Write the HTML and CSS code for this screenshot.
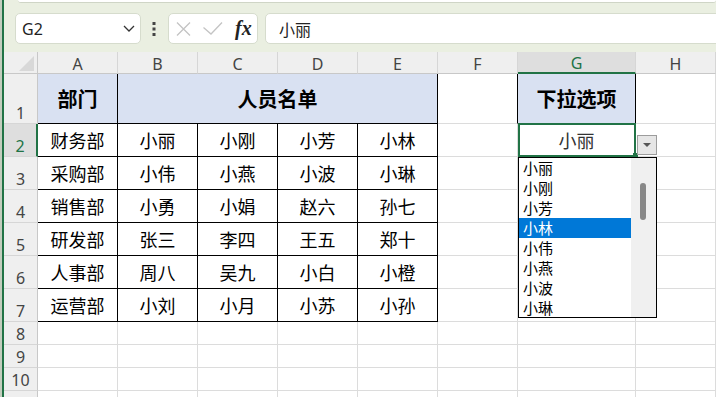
FILE: index.html
```html
<!DOCTYPE html>
<html lang="zh-CN">
<head>
    <meta charset="UTF-8">
    <title>下拉选项</title>
    <link rel="stylesheet" href="styles.css">
</head>
<body>
<div class="app">
    <div class="edge"></div>
    <div class="main">
        <div class="ribbon"></div>

        <!-- formula bar -->
        <div class="fbar">
            <div class="box namebox">
                <span>G2</span>
                <svg width="12" height="7" viewBox="0 0 12 7"><polyline points="1,1 6,6 11,1" fill="none" stroke="#333" stroke-width="1.3"/></svg>
            </div>
            <div class="more">
                <svg width="4" height="14" viewBox="0 0 4 14"><rect x="0.5" y="0" width="3" height="3" fill="#444"/><rect x="0.5" y="5.5" width="3" height="3" fill="#444"/><rect x="0.5" y="11" width="3" height="3" fill="#444"/></svg>
            </div>
            <div class="box fxbox">
                <svg class="ic-x" width="15" height="14" viewBox="0 0 15 14"><path d="M1 0.5 L14 13.5 M14 0.5 L1 13.5" stroke="#c4c4c4" stroke-width="1.3"/></svg>
                <svg class="ic-ok" width="20" height="13" viewBox="0 0 20 13"><polyline points="0.5,5.5 8,12 19,0.5" fill="none" stroke="#c4c4c4" stroke-width="1.3"/></svg>
                <span class="fx">fx</span>
            </div>
            <div class="box formula">小丽</div>
        </div>

        <!-- sheet -->
        <div class="sheet">
            <div class="corner"><svg width="15" height="15" viewBox="0 0 15 15"><polygon points="15,0 15,15 0,15" fill="#d8d8d8"/></svg></div>
            <div class="ch">A</div><div class="ch">B</div><div class="ch">C</div><div class="ch">D</div>
            <div class="ch">E</div><div class="ch">F</div><div class="ch on">G</div><div class="ch">H</div>

            <div class="rh">1</div>
            <div class="c t hd">部门</div>
            <div class="c t hd span4">人员名单</div>
            <div class="c bk"></div>
            <div class="c hd g1">下拉选项</div>
            <div class="c"></div>

            <div class="rh on">2</div>
            <div class="c t">财务部</div><div class="c t">小丽</div><div class="c t">小刚</div><div class="c t">小芳</div><div class="c t">小林</div>
            <div class="c"></div><div class="c val">小丽</div><div class="c"></div>

            <div class="rh">3</div>
            <div class="c t">采购部</div><div class="c t">小伟</div><div class="c t">小燕</div><div class="c t">小波</div><div class="c t">小琳</div>
            <div class="c"></div><div class="c"></div><div class="c"></div>

            <div class="rh">4</div>
            <div class="c t">销售部</div><div class="c t">小勇</div><div class="c t">小娟</div><div class="c t">赵六</div><div class="c t">孙七</div>
            <div class="c"></div><div class="c"></div><div class="c"></div>

            <div class="rh">5</div>
            <div class="c t">研发部</div><div class="c t">张三</div><div class="c t">李四</div><div class="c t">王五</div><div class="c t">郑十</div>
            <div class="c"></div><div class="c"></div><div class="c"></div>

            <div class="rh">6</div>
            <div class="c t">人事部</div><div class="c t">周八</div><div class="c t">吴九</div><div class="c t">小白</div><div class="c t">小橙</div>
            <div class="c"></div><div class="c"></div><div class="c"></div>

            <div class="rh">7</div>
            <div class="c t">运营部</div><div class="c t">小刘</div><div class="c t">小月</div><div class="c t">小苏</div><div class="c t">小孙</div>
            <div class="c"></div><div class="c"></div><div class="c"></div>

            <div class="rh">8</div>
            <div class="c"></div><div class="c"></div><div class="c"></div><div class="c"></div><div class="c"></div><div class="c"></div><div class="c"></div><div class="c"></div>
            <div class="rh">9</div>
            <div class="c"></div><div class="c"></div><div class="c"></div><div class="c"></div><div class="c"></div><div class="c"></div><div class="c"></div><div class="c"></div>
            <div class="rh">10</div>
            <div class="c"></div><div class="c"></div><div class="c"></div><div class="c"></div><div class="c"></div><div class="c"></div><div class="c"></div><div class="c"></div>
            <div class="rh"></div>
            <div class="c"></div><div class="c"></div><div class="c"></div><div class="c"></div><div class="c"></div><div class="c"></div><div class="c"></div><div class="c"></div>

            <!-- selection + validation dropdown, drawn over the grid -->
            <div class="sel"></div>
            <div class="handle"></div>
            <div class="dd-btn"><span class="tri"></span></div>
            <div class="dd-list">
                <ul class="dd-items">
                    <li>小丽</li>
                    <li>小刚</li>
                    <li>小芳</li>
                    <li class="hl">小林</li>
                    <li>小伟</li>
                    <li>小燕</li>
                    <li>小波</li>
                    <li>小琳</li>
                </ul>
                <div class="dd-scroll"><div class="dd-thumb"></div></div>
            </div>
        </div>
    </div>
</div>
</body>
</html>
```

FILE: styles.css
```css
* {
    box-sizing: border-box;
}
body {
    margin: 0;
    width: 716px;
    height: 397px;
    overflow: hidden;
    background: #fff;
    font-family: "Noto Sans", "Noto Sans CJK SC", sans-serif;
}
.app {
    display: flex;
    height: 397px;
}
.edge {
    width: 4px;
    flex: none;
    background: #c3cdbe;
    border-right: 2px solid #217346;
}
.main {
    flex: 1;
    min-width: 0;
    background: #eaefe1;
}
.ribbon {
    height: 3px;
    margin-left: 14px;
    background: #fff;
    border-bottom: 1px solid #cfd5c6;
    border-radius: 0 0 6px 6px;
}

/* formula bar */
.fbar {
    display: flex;
    align-items: center;
    height: 49px;
    padding: 10px 0 8px 11px;
}
.box {
    height: 31px;
    background: #fff;
    border: 1px solid #d6dccd;
    border-radius: 5px;
    display: flex;
    align-items: center;
}
.namebox {
    width: 126px;
    justify-content: space-between;
    padding: 0 5px 0 6px;
    font-size: 16px;
    color: #1f1f1f;
}
.more {
    width: 27px;
    display: flex;
    justify-content: center;
    padding-right: 1px;
}
.fxbox {
    width: 90px;
    padding-left: 7px;
}
.ic-ok {
    margin-left: 12px;
}
.fx {
    margin-left: 12px;
    font-family: "Liberation Serif", serif;
    font-style: italic;
    font-weight: 700;
    font-size: 20px;
    color: #222;
}
.formula {
    flex: 1;
    margin-left: 7px;
    margin-right: -10px;
    padding-left: 13px;
    font-family: "Noto Sans CJK SC", sans-serif;
    font-size: 16px;
    color: #222;
}

/* grid */
.sheet {
    position: relative;
    display: grid;
    grid-template-columns: 34px repeat(6, 80px) 118px 80px;
    grid-template-rows: 22px 50px repeat(6, 33px) repeat(4, 23px);
    background: #fff;
}
.corner {
    background: #efefef;
    border-right: 1px solid #c8c8c8;
    border-bottom: 1px solid #c8c8c8;
    display: flex;
    justify-content: flex-end;
    align-items: flex-end;
    padding: 0 3px 2px 0;
}
.ch {
    background: #efefef;
    border-right: 1px solid #d6d6d6;
    border-bottom: 1px solid #c8c8c8;
    display: flex;
    justify-content: center;
    align-items: center;
    padding-top: 2px;
    font-size: 16px;
    color: #444;
}
.ch.on {
    background: #dedede;
    border-bottom: 2px solid #217346;
    color: #217346;
}
.rh {
    background: #efefef;
    border-right: 1px solid #c8c8c8;
    border-bottom: 1px solid #d6d6d6;
    display: flex;
    justify-content: center;
    align-items: flex-end;
    padding-bottom: 2px;
    font-size: 16px;
    line-height: 1;
    color: #444;
}
.rh.on {
    background: #dedede;
    border-right: 2px solid #217346;
    color: #217346;
}
.c {
    border-right: 1px solid #dcdcdc;
    border-bottom: 1px solid #dcdcdc;
    display: flex;
    justify-content: center;
    align-items: center;
    font-family: "Noto Sans CJK SC", sans-serif;
    font-size: 18px;
    color: #000;
}
.t {
    border-right-color: #000;
    border-bottom-color: #000;
}
.bk {
    border-right-color: #000;
}
.hd {
    background: #d9e1f2;
    font-weight: 700;
    font-size: 20px;
}
.span4 {
    grid-column: span 4;
}
.g1 {
    border-right-color: #000;
    border-bottom-color: #000;
}
.val {
    color: #333;
}

/* overlays */
.sel {
    position: absolute;
    left: 514px;
    top: 71px;
    width: 118px;
    height: 34px;
    border: 2px solid #217346;
}
.handle {
    position: absolute;
    left: 629px;
    top: 101px;
    width: 5px;
    height: 5px;
    background: #217346;
}
.dd-btn {
    position: absolute;
    left: 633px;
    top: 83px;
    width: 20px;
    height: 20px;
    background: #e6e6e6;
    border: 1px solid #9c9c9c;
    display: flex;
    justify-content: center;
    align-items: center;
}
.tri {
    width: 0;
    height: 0;
    border-left: 4px solid transparent;
    border-right: 4px solid transparent;
    border-top: 4px solid #555;
}
.dd-list {
    position: absolute;
    left: 514px;
    top: 105px;
    width: 139px;
    height: 161px;
    background: #fff;
    border: 1px solid #000;
    display: flex;
    overflow: hidden;
}
.dd-items {
    flex: 1;
    list-style: none;
    margin: 0;
    padding: 0;
}
.dd-items li {
    height: 20px;
    line-height: 20px;
    padding-left: 4px;
    font-family: "Noto Sans CJK SC", sans-serif;
    font-size: 15px;
    color: #000;
}
.dd-items li.hl {
    background: #0078d7;
    color: #fff;
}
.dd-scroll {
    width: 25px;
    background: #f0f0f0;
    position: relative;
}
.dd-thumb {
    position: absolute;
    left: 9px;
    top: 25px;
    width: 6px;
    height: 37px;
    background: #888;
    border-radius: 3px;
}
```
